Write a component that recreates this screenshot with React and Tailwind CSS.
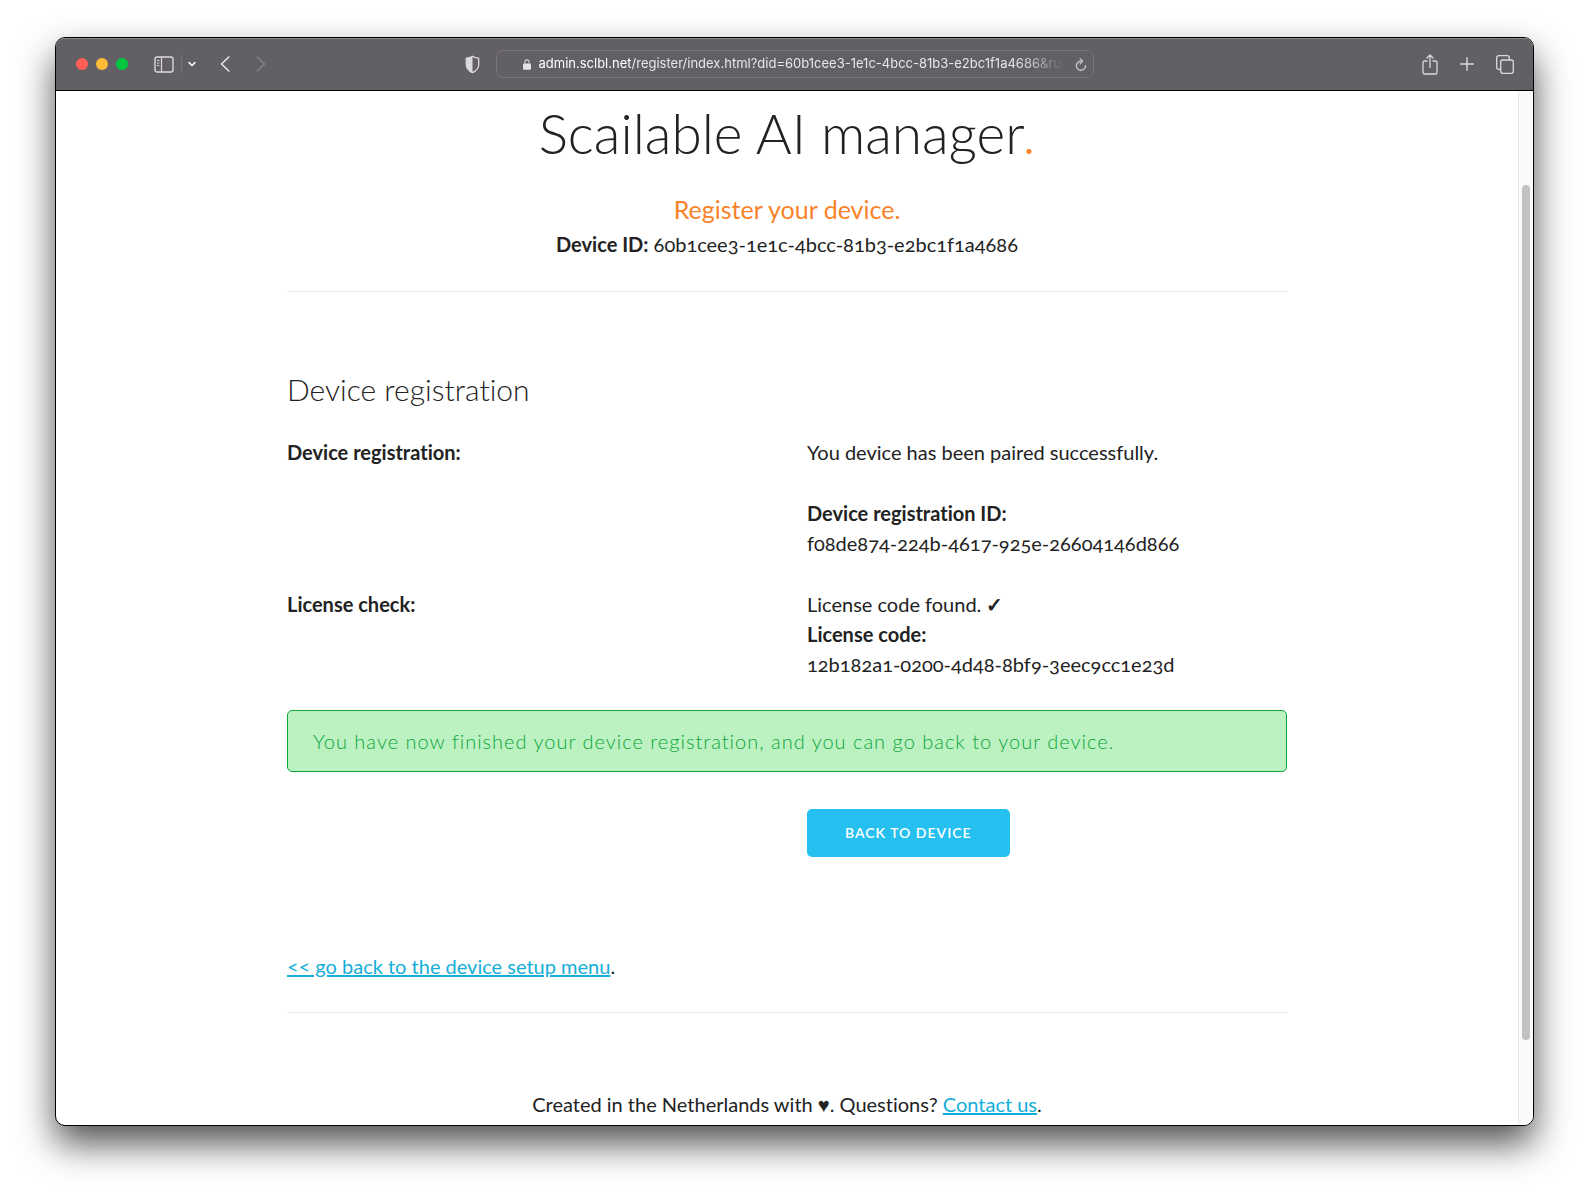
function SidebarIcon() {
  return (
    <svg width="20" height="17" viewBox="0 0 20 17" fill="none" stroke="#dcd9de" aria-hidden="true">
      <rect x="1" y="1" width="18" height="15" rx="2" strokeWidth="1.4" />
      <path d="M7.5 1v15" strokeWidth="1.2" />
      <path d="M3 4.5h2.4M3 7h2.4M3 9.5h2.4" strokeWidth="1" />
    </svg>
  );
}

function Chevron({ className, d, width, height, strokeWidth }) {
  return (
    <svg className={className} width={width} height={height} viewBox={`0 0 ${width} ${height}`} fill="none" stroke="currentColor" strokeWidth={strokeWidth} strokeLinecap="round" strokeLinejoin="round" aria-hidden="true">
      <path d={d} />
    </svg>
  );
}

function ShieldIcon() {
  return (
    <svg width="15" height="19" viewBox="0 0 15 19" aria-hidden="true">
      <path d="M7.5 1.2C9.3 2.4 11.5 3 13.7 3.1V9.5C13.7 13.6 11 16 7.5 17.7C4 16 1.3 13.6 1.3 9.5V3.1C3.5 3 5.7 2.4 7.5 1.2Z" fill="none" stroke="#dcd9de" strokeWidth="1.3" strokeLinejoin="round" />
      <path d="M7.5 1.2V17.7C4 16 1.3 13.6 1.3 9.5V3.1C3.5 3 5.7 2.4 7.5 1.2Z" fill="#dcd9de" />
    </svg>
  );
}

function LockIcon() {
  return (
    <svg width="8" height="11" viewBox="0 0 8 11" aria-hidden="true">
      <rect x="0" y="4.6" width="8" height="6.2" rx="1" fill="#e4e2e6" />
      <path d="M1.9 5V3.2a2.1 2.3 0 0 1 4.2 0V5" fill="none" stroke="#cfcdd1" strokeWidth="1.1" />
    </svg>
  );
}

function ReloadIcon() {
  return (
    <svg width="12" height="13" viewBox="0 0 12 13" fill="none" stroke="#c4c1c6" strokeWidth="1.4" strokeLinecap="round" strokeLinejoin="round" aria-hidden="true">
      <path d="M7 3.2A4.6 4.6 0 1 0 10.6 7.7" />
      <path d="M5.2 0.9L7.6 3.3L5.2 5.7" />
    </svg>
  );
}

function ShareIcon() {
  return (
    <svg width="16" height="21" viewBox="0 0 16 21" fill="none" stroke="#dcd9de" strokeWidth="1.3" strokeLinecap="round" strokeLinejoin="round" aria-hidden="true">
      <path d="M5 7H2.6A1.6 1.6 0 0 0 1 8.6V18.4A1.6 1.6 0 0 0 2.6 20H13.4A1.6 1.6 0 0 0 15 18.4V8.6A1.6 1.6 0 0 0 13.4 7H11" />
      <path d="M8 13.5V1M5 4L8 1L11 4" />
    </svg>
  );
}

function PlusIcon() {
  return (
    <svg width="14" height="14" viewBox="0 0 14 14" fill="none" stroke="#dcd9de" strokeWidth="1.4" strokeLinecap="round" aria-hidden="true">
      <path d="M7 0.7V13.3M0.7 7H13.3" />
    </svg>
  );
}

function TabsIcon() {
  return (
    <svg width="18" height="19" viewBox="0 0 18 19" fill="none" stroke="#dcd9de" strokeWidth="1.3" strokeLinejoin="round" aria-hidden="true">
      <rect x="4.7" y="5" width="12.6" height="13.3" rx="2" />
      <path d="M4.7 14.3H2.7A2 2 0 0 1 0.7 12.3V2.7A2 2 0 0 1 2.7 0.7H11.3A2 2 0 0 1 13.3 2.7V5" />
    </svg>
  );
}

function Toolbar() {
  return (
    <header className="grid h-[53px] grid-cols-[1fr_minmax(0,598px)_1fr] items-center border-b border-black bg-[#625f65] shadow-[inset_0_1px_0_#8a878c]">
      <div className="flex items-center pl-5 pr-4">
        <div className="flex gap-2">
          <button aria-label="Close" className="size-3 rounded-full bg-[#ff5f57]" />
          <button aria-label="Minimize" className="size-3 rounded-full bg-[#febc38]" />
          <button aria-label="Zoom" className="size-3 rounded-full bg-[#02c840]" />
        </div>
        <button aria-label="Show sidebar" className="ml-[26px]"><SidebarIcon /></button>
        <span className="ml-[7px] h-[18px] w-px bg-[#757278]" />
        <button aria-label="Sidebar options" className="ml-1.5 text-white">
          <Chevron width={8} height={6} d="M1 1.5L4 4.5L7 1.5" strokeWidth={1.6} />
        </button>
        <button aria-label="Back" className="ml-6 text-[#e6e4e8]">
          <Chevron width={10} height={16} d="M8.8 1L1.5 8L8.8 15" strokeWidth={1.6} />
        </button>
        <button aria-label="Forward" disabled className="ml-[26px] text-[#858288]">
          <Chevron width={10} height={16} d="M1.2 1L8.5 8L1.2 15" strokeWidth={1.6} />
        </button>
        <button aria-label="Privacy report" className="ml-auto"><ShieldIcon /></button>
      </div>
      <div className="flex h-7 items-center rounded-[7px] border border-[#77747a] pl-[26px] pr-1.5">
        <LockIcon />
        <input
          aria-label="Address"
          readOnly
          value="admin.sclbl.net/register/index.html?did=60b1cee3-1e1c-4bcc-81b3-e2bc1f1a4686&run=1"
          className="ml-2 min-w-0 flex-1 bg-transparent font-['Inter',sans-serif] text-[13px] text-white outline-none [mask-image:linear-gradient(to_right,#000_0,#000_90px,rgba(0,0,0,0.85)_92px,rgba(0,0,0,0.85)_475px,rgba(0,0,0,0.6)_495px,transparent_525px)]"
        />
        <button aria-label="Reload" className="ml-2"><ReloadIcon /></button>
      </div>
      <div className="flex items-center justify-end pr-[19px]">
        <button aria-label="Share" className="mr-[22px]"><ShareIcon /></button>
        <button aria-label="New tab" className="mr-[22px]"><PlusIcon /></button>
        <button aria-label="Tab overview"><TabsIcon /></button>
      </div>
    </header>
  );
}

export default function App() {
  return (
    <div className="flex min-h-screen flex-col bg-white px-[55px] pb-[73px] pt-[37px]">
      <div className="flex flex-1 flex-col overflow-hidden rounded-[10px] border border-black bg-white shadow-[0_18px_36px_rgba(0,0,0,0.68)]">
        <Toolbar />
        <div className="flex flex-1">
          <main className="flex-1 px-6 font-['Lato',sans-serif] text-xl leading-[30px] text-[#222] [font-variant-ligatures:none]">
            <div className="mx-auto max-w-[1000px]">
              <section className="pt-2 text-center">
                <h1 className="text-[55px] font-light leading-[68px]">
                  Scailable AI manager<span className="text-[#f98329]">.</span>
                </h1>
                <p className="mt-6 text-[25px] leading-9 text-[#f98329]">Register your device.</p>
                <p className="mt-0.5 oldstyle-nums"><strong className="font-bold">Device ID:</strong> 60b1cee3-1e1c-4bcc-81b3-e2bc1f1a4686</p>
              </section>
              <hr className="mt-8 border-[#ececec]" />

              <section className="mt-[79px]">
                <h2 className="text-3xl font-light leading-9">Device registration</h2>
                <dl className="mt-[30px] grid grid-cols-2 gap-x-10 gap-y-[31px] oldstyle-nums">
                  <dt className="font-bold">Device registration:</dt>
                  <dd>
                    <p>You device has been paired successfully.</p>
                    <p className="mt-[31px] font-bold">Device registration ID:</p>
                    <p>f08de874-224b-4617-925e-26604146d866</p>
                  </dd>
                  <dt className="font-bold">License check:</dt>
                  <dd>
                    <p>License code found. <b>✓</b></p>
                    <p className="font-bold">License code:</p>
                    <p>12b182a1-0200-4d48-8bf9-3eec9cc1e23d</p>
                  </dd>
                </dl>
                <p role="status" className="mt-[31px] rounded-[5px] border border-[#0ba53a] bg-[#bcf2c1] px-[25px] py-[15px] font-light tracking-[1px] text-[#0ba53a]">
                  You have now finished your device registration, and you can go back to your device.
                </p>
                <div className="mt-[37px] grid grid-cols-2 gap-x-10">
                  <button className="col-start-2 h-12 justify-self-start rounded-[5px] bg-[#25c0f0] px-[38px] text-sm font-semibold uppercase tracking-[1px] text-white">Back to device</button>
                </div>
              </section>

              <p className="mt-[94px]">
                <a href="#menu" className="text-[#14aed9] underline">&lt;&lt; go back to the device setup menu</a>.
              </p>
              <hr className="mt-[31px] border-[#ececec]" />
              <footer className="mt-[76px] pb-1 text-center">
                Created in the Netherlands with ♥. Questions? <a href="#contact" className="text-[#14aed9] underline">Contact us</a>.
              </footer>
            </div>
          </main>
          <div className="flex w-[15px] flex-col border-l border-[#e8e8e8] bg-[#fafafa] pb-[85px] pl-[3px] pt-[94px]">
            <div className="w-2 flex-1 rounded-full bg-[#c1c1c1]" />
          </div>
        </div>
      </div>
    </div>
  );
}
